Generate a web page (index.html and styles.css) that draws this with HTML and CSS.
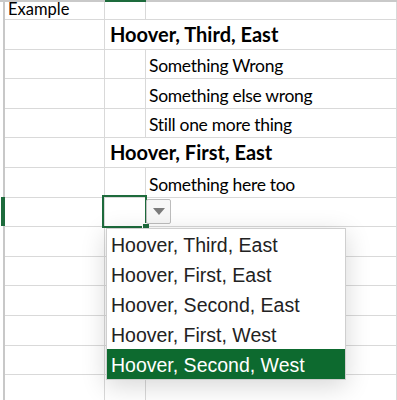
FILE: index.html
```html
<!DOCTYPE html>
<html>
<head>
<meta charset="utf-8">
<link rel="stylesheet" href="styles.css">
</head>
<body>
<div class="sheet">
  <div class="colhead">
    <div class="ch-b"></div>
  </div>
  <div class="row row0">
    <div class="gut"></div>
    <div class="cell a"><span class="t">Example</span></div>
    <div class="cell b"></div>
    <div class="cell c"></div>
  </div>
  <div class="row">
    <div class="gut"></div>
    <div class="cell a"></div>
    <div class="cell bc"><span class="t bold">Hoover, Third, East</span></div>
  </div>
  <div class="row">
    <div class="gut"></div>
    <div class="cell a"></div>
    <div class="cell b"></div>
    <div class="cell c"><span class="t">Something Wrong</span></div>
  </div>
  <div class="row">
    <div class="gut"></div>
    <div class="cell a"></div>
    <div class="cell b"></div>
    <div class="cell c"><span class="t">Something else wrong</span></div>
  </div>
  <div class="row">
    <div class="gut"></div>
    <div class="cell a"></div>
    <div class="cell b"></div>
    <div class="cell c"><span class="t">Still one more thing</span></div>
  </div>
  <div class="row">
    <div class="gut"></div>
    <div class="cell a"></div>
    <div class="cell bc"><span class="t bold">Hoover, First, East</span></div>
  </div>
  <div class="row">
    <div class="gut"></div>
    <div class="cell a"></div>
    <div class="cell b"></div>
    <div class="cell c"><span class="t">Something here too</span></div>
  </div>
  <div class="row">
    <div class="gut sel"></div>
    <div class="cell a"></div>
    <div class="cell b active">
      <div class="selbox"><div class="handle"></div></div>
      <div class="ddbtn"><svg width="12" height="7" viewBox="0 0 12 7"><path d="M0 0H12L6 7Z" fill="#7b7b7b"/></svg></div>
    </div>
    <div class="cell c"></div>
  </div>
  <div class="row"><div class="gut"></div><div class="cell a"></div><div class="cell b"></div><div class="cell c"></div></div>
  <div class="row"><div class="gut"></div><div class="cell a"></div><div class="cell b"></div><div class="cell c"></div></div>
  <div class="row"><div class="gut"></div><div class="cell a"></div><div class="cell b"></div><div class="cell c"></div></div>
  <div class="row"><div class="gut"></div><div class="cell a"></div><div class="cell b"></div><div class="cell c"></div></div>
  <div class="row"><div class="gut"></div><div class="cell a"></div><div class="cell b"></div><div class="cell c"></div></div>
  <div class="row"><div class="gut"></div><div class="cell a"></div><div class="cell b"></div><div class="cell c"></div></div>
</div>
<ul class="dropdown">
  <li>Hoover, Third, East</li>
  <li>Hoover, First, East</li>
  <li>Hoover, Second, East</li>
  <li>Hoover, First, West</li>
  <li class="hl">Hoover, Second, West</li>
</ul>
</body>
</html>
```
FILE: styles.css
```css
html, body {
  margin: 0;
  padding: 0;
  background: #fff;
  overflow: hidden;
}
body {
  width: 397px;
  height: 400px;
  position: relative;
}
.sheet {
  display: flex;
  flex-direction: column;
  font-family: Lato, "Liberation Sans", sans-serif;
  color: #000;
}
.colhead {
  display: flex;
  height: 2px;
  background: #c9c9c9;
  padding-left: 105px;
}
.ch-b {
  width: 41px;
  height: 2px;
  background: #1d6b3c;
}
.row {
  display: flex;
  height: 29.6px;
  flex: none;
}
.row0 {
  height: 18px;
}
.gut {
  width: 3px;
  border-right: 2px solid #c8c8c8;
  flex: none;
}
.gut.sel {
  position: relative;
}
.gut.sel::after {
  content: "";
  position: absolute;
  left: 1px;
  right: -2px;
  top: -1px;
  bottom: 1px;
  background: #1d6b3c;
}
.cell {
  box-sizing: border-box;
  border-bottom: 1px solid #d9d9d9;
  border-right: 1px solid #d9d9d9;
  display: flex;
  align-items: flex-end;
  white-space: nowrap;
  flex: none;
}
.a { width: 100px; }
.b { width: 41px; }
.c { flex: 1; }
.bc { flex: 1; }
.t {
  font-size: 17.5px;
  line-height: 18px;
  letter-spacing: -0.3px;
  padding-bottom: 3px;
}
.row0 .t {
  font-size: 16.5px;
  line-height: 15px;
  letter-spacing: 0;
  padding-bottom: 2px;
  padding-left: 3px;
}
.bc .t { padding-left: 5px; }
.c .t { padding-left: 3px; }
.bold {
  font-weight: 700;
  font-size: 20px;
  letter-spacing: 0;
  padding-bottom: 6px;
}
.active {
  position: relative;
}
.selbox {
  position: absolute;
  left: -3px;
  top: -3px;
  width: 45px;
  height: 33px;
  box-sizing: border-box;
  border: 2px solid #1d6b3c;
  z-index: 2;
}
.handle {
  position: absolute;
  right: -4px;
  bottom: -4px;
  width: 6px;
  height: 6px;
  background: #1d6b3c;
  border-left: 1px solid #fff;
  border-top: 1px solid #fff;
}
.ddbtn {
  position: absolute;
  left: 41px;
  top: 1px;
  width: 25px;
  height: 25px;
  box-sizing: border-box;
  border: 1px solid #bdbdbd;
  border-radius: 2px;
  background: #f7f7f7;
  display: flex;
  align-items: center;
  justify-content: center;
  z-index: 3;
}
.dropdown {
  position: absolute;
  left: 106px;
  top: 228px;
  width: 240px;
  margin: 0;
  padding: 0;
  list-style: none;
  background: #fff;
  border: 1px solid #cfcfcf;
  box-sizing: border-box;
  box-shadow: 0 6px 24px rgba(0,0,0,0.16);
  font-family: "Liberation Sans", Arial, sans-serif;
  font-size: 19.5px;
  color: #222;
  z-index: 5;
}
.dropdown li {
  height: 29px;
  padding-top: 1px;
  line-height: 30px;
  padding-left: 4px;
}
.dropdown li.hl {
  background: #0d6a2f;
  color: #fff;
}
```
